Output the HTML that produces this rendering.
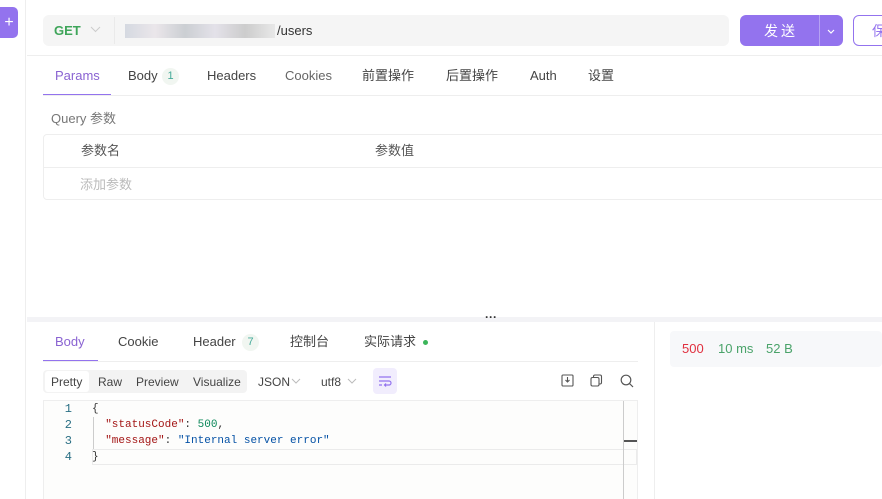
<!DOCTYPE html>
<html><head><meta charset="utf-8"><style>
*{box-sizing:border-box;margin:0;padding:0}
body{width:882px;height:499px;overflow:hidden;background:#fff;font-family:"Liberation Sans","Noto Sans CJK SC",sans-serif;font-size:13px;color:#333;position:relative}
.a{position:absolute;line-height:18px}
.tab{position:absolute;top:67px;font-size:13px;color:#444;line-height:18px;height:18px}
.rt{position:absolute;top:333px;font-size:13px;color:#444;line-height:18px;height:18px}
.mono{font-family:"Liberation Mono","DejaVu Sans Mono",monospace;font-size:11px}
.chev{position:absolute}
</style></head><body>
<div class="a" style="left:0;top:0;width:26px;height:499px;border-right:1px solid #eee"></div>
<div class="a" style="left:0;top:7px;width:18px;height:31px;background:#9373ee;border-radius:0 5px 5px 0;color:#fff;font-size:16px;line-height:31px;text-align:center">+</div>
<div class="a" style="left:43px;top:15px;width:686px;height:31px;background:#f5f5f5;border-radius:6px"></div>
<div class="a" style="left:54px;top:22px;font-weight:bold;color:#3fa55a;font-size:13px">GET</div>
<svg class="chev" style="left:90px;top:26px" width="11" height="7" viewBox="0 0 11 7" fill="none" stroke="#ccc" stroke-width="1"><path d="M1 1l4.5 4.5L10 1"/></svg>
<div class="a" style="left:114px;top:17px;width:1px;height:27px;background:#eaeaea"></div>
<div class="a" style="left:125px;top:24px;width:150px;height:14px;background:linear-gradient(90deg,#c7cdd8,#e6e0e6,#b9bec4,#dcd9e4,#bbb,#e2e2e2);opacity:.7"></div>
<div class="a" style="left:277px;top:22px;font-size:13px;color:#333">/users</div>
<div class="a" style="left:740px;top:15px;width:103px;height:31px;background:#9373ee;border-radius:6px"></div>
<div class="a" style="left:819px;top:15px;width:1px;height:31px;background:#b6a2f3"></div>
<div class="a" style="left:764px;top:22px;color:#fff;font-size:14px;letter-spacing:3px">发送</div>
<svg class="chev" style="left:827px;top:29px" width="8" height="5" viewBox="0 0 8 5" fill="none" stroke="#fff" stroke-width="1.2"><path d="M1 1l3 3 3-3"/></svg>
<div class="a" style="left:853px;top:15px;width:40px;height:31px;border:1px solid #9373ee;border-radius:6px"></div>
<div class="a" style="left:872px;top:22px;color:#9373ee;font-size:14px">保</div>
<div class="a" style="left:27px;top:55px;width:855px;height:1px;background:#eee"></div>
<div class="tab" style="left:55px;color:#8a63d2">Params</div>
<div class="tab" style="left:128px">Body</div>
<div class="a" style="left:162px;top:68px;width:17px;height:17px;border-radius:50%;background:#f1f6f1;color:#4a9;font-size:11px;text-align:center;line-height:17px">1</div>
<div class="tab" style="left:207px">Headers</div>
<div class="tab" style="left:285px;color:#666">Cookies</div>
<div class="tab" style="left:362px">前置操作</div>
<div class="tab" style="left:446px">后置操作</div>
<div class="tab" style="left:530px">Auth</div>
<div class="tab" style="left:588px">设置</div>
<div class="a" style="left:43px;top:94px;width:68px;height:2px;background:#9373ee"></div>
<div class="a" style="left:43px;top:95px;width:839px;height:1px;background:#eee"></div>
<div class="a" style="left:51px;top:110px;color:#777">Query 参数</div>
<div class="a" style="left:43px;top:134px;width:850px;height:66px;border:1px solid #eee;border-radius:4px"></div>
<div class="a" style="left:43px;top:167px;width:839px;height:1px;background:#eee"></div>
<div class="a" style="left:81px;top:142px;color:#555">参数名</div>
<div class="a" style="left:375px;top:142px;color:#555">参数值</div>
<div class="a" style="left:80px;top:176px;color:#bbb">添加参数</div>
<div class="a" style="left:27px;top:317px;width:855px;height:5px;background:#f3f3f6"></div>
<div class="a" style="left:485px;top:312px;color:#333;font-size:12px;font-weight:bold;line-height:10px">···</div>
<div class="a" style="left:654px;top:322px;width:1px;height:177px;background:#eee"></div>
<div class="rt" style="left:55px;color:#8a63d2">Body</div>
<div class="rt" style="left:118px">Cookie</div>
<div class="rt" style="left:193px">Header</div>
<div class="a" style="left:242px;top:334px;width:17px;height:17px;border-radius:50%;background:#f1f6f1;color:#4a9;font-size:11px;text-align:center;line-height:17px">7</div>
<div class="rt" style="left:290px">控制台</div>
<div class="rt" style="left:364px">实际请求</div>
<div class="a" style="left:423px;top:340px;width:5px;height:5px;border-radius:50%;background:#3bb55a"></div>
<div class="a" style="left:43px;top:360px;width:55px;height:2px;background:#9373ee"></div>
<div class="a" style="left:43px;top:361px;width:595px;height:1px;background:#eee"></div>
<div class="a" style="left:43px;top:370px;width:204px;height:23px;background:#f3f3f3;border-radius:4px"></div>
<div class="a" style="left:45px;top:371px;width:44px;height:21px;background:#fff;border-radius:3px"></div>
<div class="a" style="left:51px;top:373px;font-size:12px;color:#444">Pretty</div>
<div class="a" style="left:98px;top:373px;font-size:12px;color:#444">Raw</div>
<div class="a" style="left:136px;top:373px;font-size:12px;color:#444">Preview</div>
<div class="a" style="left:193px;top:373px;font-size:12px;color:#444">Visualize</div>
<div class="a" style="left:258px;top:373px;font-size:12px;color:#444">JSON</div>
<svg class="chev" style="left:291px;top:378px" width="10" height="6" viewBox="0 0 10 6" fill="none" stroke="#bbb" stroke-width="1"><path d="M1 1l4 4 4-4"/></svg>
<div class="a" style="left:321px;top:373px;font-size:12px;color:#444">utf8</div>
<svg class="chev" style="left:347px;top:378px" width="10" height="6" viewBox="0 0 10 6" fill="none" stroke="#bbb" stroke-width="1"><path d="M1 1l4 4 4-4"/></svg>
<div class="a" style="left:373px;top:368px;width:24px;height:26px;background:#f1edfd;border-radius:4px"></div>
<svg class="a" style="left:378px;top:374px" width="14" height="14" viewBox="0 0 14 14" fill="none" stroke="#9373ee" stroke-width="1.2"><path d="M1 3h12M1 7h10a2 2 0 010 4H7M8 9.5l-1.5 1.5 1.5 1.5M1 11h3"/></svg>
<svg class="a" style="left:561px;top:374px" width="13" height="13" viewBox="0 0 13 13" fill="none" stroke="#555" stroke-width="1.1"><rect x="1" y="1" width="11" height="11" rx="1"/><path d="M6.5 3v5M4.5 6l2 2 2-2"/></svg>
<svg class="a" style="left:590px;top:374px" width="13" height="13" viewBox="0 0 13 13" fill="none" stroke="#555" stroke-width="1.1"><rect x="1" y="3.5" width="8" height="8.5" rx="1.5"/><path d="M3.5 3.5V2.5a1.5 1.5 0 011.5-1.5h5a1.5 1.5 0 011.5 1.5v6a1.5 1.5 0 01-1.5 1.5H9"/></svg>
<svg class="a" style="left:620px;top:374px" width="14" height="14" viewBox="0 0 14 14" fill="none" stroke="#555" stroke-width="1.2"><circle cx="6" cy="6" r="4.8"/><path d="M9.5 9.5L13 13"/></svg>
<div class="a" style="left:43px;top:400px;width:595px;height:99px;background:#fdfdfc;border:1px solid #eee;border-bottom:none"></div>
<div class="a" style="left:92px;top:449px;width:545px;height:16px;border:1px solid #ebebeb"></div>
<div class="a" style="left:623px;top:401px;width:1px;height:98px;background:#ccc"></div>
<div class="a" style="left:624px;top:440px;width:13px;height:2px;background:#555"></div>
<div class="a" style="left:93px;top:417px;width:1px;height:32px;background:#ccc"></div>
<div class="a mono" style="left:64px;top:401px;line-height:16px;color:#2a6f84;text-align:right;width:8px;font-size:12px">1<br>2<br>3<br>4</div>
<div class="a mono" style="left:92px;top:401px;line-height:16px;white-space:pre;color:#333">{
  <span style="color:#a31515">"statusCode"</span>: <span style="color:#098658">500</span>,
  <span style="color:#a31515">"message"</span>: <span style="color:#0451a5">"Internal server error"</span>
}</div>
<div class="a" style="left:670px;top:331px;width:212px;height:36px;background:#f7f8fa;border-radius:4px"></div>
<div class="a" style="left:682px;top:340px;color:#e0303f">500</div>
<div class="a" style="left:718px;top:340px;color:#4aa36a">10 ms</div>
<div class="a" style="left:766px;top:340px;color:#4aa36a">52 B</div>
</body></html>
